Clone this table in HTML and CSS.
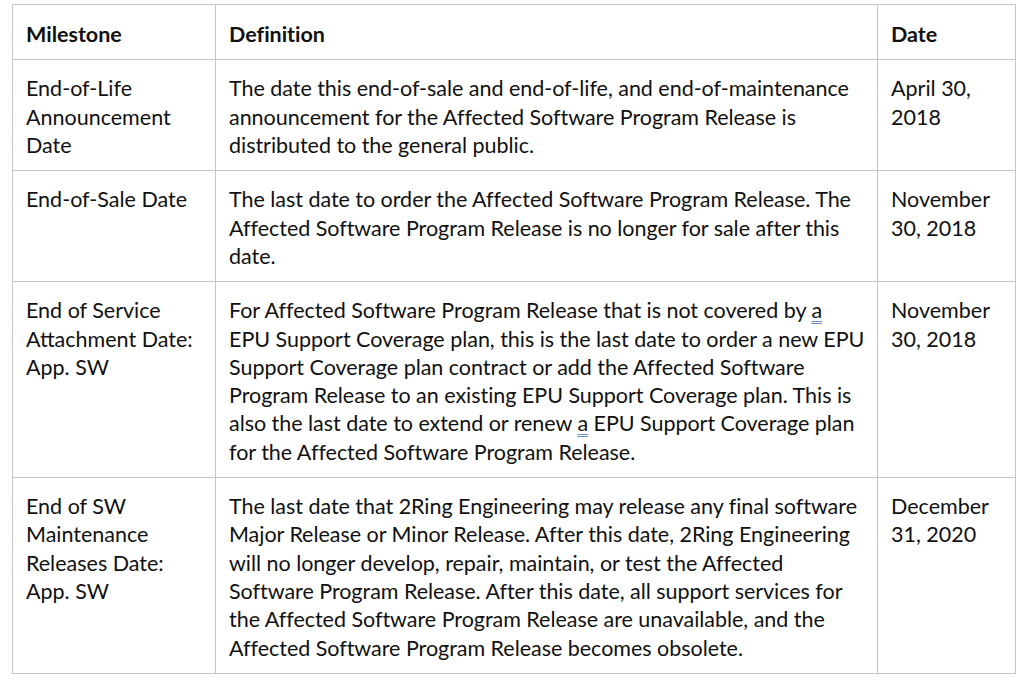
FILE: index.html
```html
<!DOCTYPE html>
<html>
<head>
<meta charset="utf-8">
<link rel="stylesheet" href="styles.css">
</head>
<body>
<table class="eol">
  <colgroup>
    <col class="c-milestone">
    <col class="c-definition">
    <col class="c-date">
  </colgroup>
  <thead>
    <tr>
      <th>Milestone</th>
      <th class="def">Definition</th>
      <th>Date</th>
    </tr>
  </thead>
  <tbody>
    <tr class="r1">
      <td>End-of-Life Announcement Date</td>
      <td class="def">The date this end-of-sale and end-of-life, and end-of-maintenance announcement for the Affected Software Program Release is distributed to the general public.</td>
      <td>April 30, 2018</td>
    </tr>
    <tr class="r2">
      <td>End-of-Sale Date</td>
      <td class="def">The last date to order the Affected Software Program Release. The Affected Software Program Release is no longer for sale after this date.</td>
      <td>November 30, 2018</td>
    </tr>
    <tr class="r3">
      <td>End of Service Attachment Date: App. SW</td>
      <td class="def">For Affected Software Program Release that is not covered by <span class="gram">a</span><br>EPU Support Coverage plan, this is the last date to order a new EPU Support Coverage plan contract or add the Affected Software Program Release to an existing EPU Support Coverage plan. This is also the last date to extend or renew <span class="gram">a</span> EPU Support Coverage plan for the Affected Software Program Release.</td>
      <td>November 30, 2018</td>
    </tr>
    <tr class="r4">
      <td>End of SW Maintenance Releases Date: App. SW</td>
      <td class="def">The last date that 2Ring Engineering may release any final software Major Release or Minor Release. After this date, 2Ring Engineering will no longer develop, repair, maintain, or test the Affected Software Program Release. After this date, all support services for the Affected Software Program Release are unavailable, and the Affected Software Program Release becomes obsolete.</td>
      <td>December 31, 2020</td>
    </tr>
  </tbody>
</table>
</body>
</html>
```

FILE: styles.css
```css
html, body {
  margin: 0;
  padding: 0;
  background: #ffffff;
}
body {
  padding: 4px 0 0 12px;
  font-family: Lato, "Liberation Sans", sans-serif;
  color: #111111;
}
.eol {
  border-collapse: collapse;
  table-layout: fixed;
  width: 1003px;
  font-size: 21.5px;
  line-height: 28.3px;
}
.c-milestone { width: 203px; }
.c-definition { width: 662px; }
.c-date { width: 138px; }
.eol th,
.eol td {
  border: 1.5px solid #c4c4c4;
  text-align: left;
  vertical-align: top;
  padding: 14px 12px 11px 13px;
}
.eol th {
  font-weight: 700;
  padding-top: 15px;
}
.eol .def {
  padding-right: 4px;
  letter-spacing: -0.03px;
}
.r1 td { height: 85px; }
.r2 td { height: 85px; }
.r3 td { height: 169px; }
.r4 td { height: 170px; }
.gram {
  text-decoration: underline double #6f8fbf;
  text-underline-offset: 3px;
  text-decoration-thickness: 1px;
}
```
